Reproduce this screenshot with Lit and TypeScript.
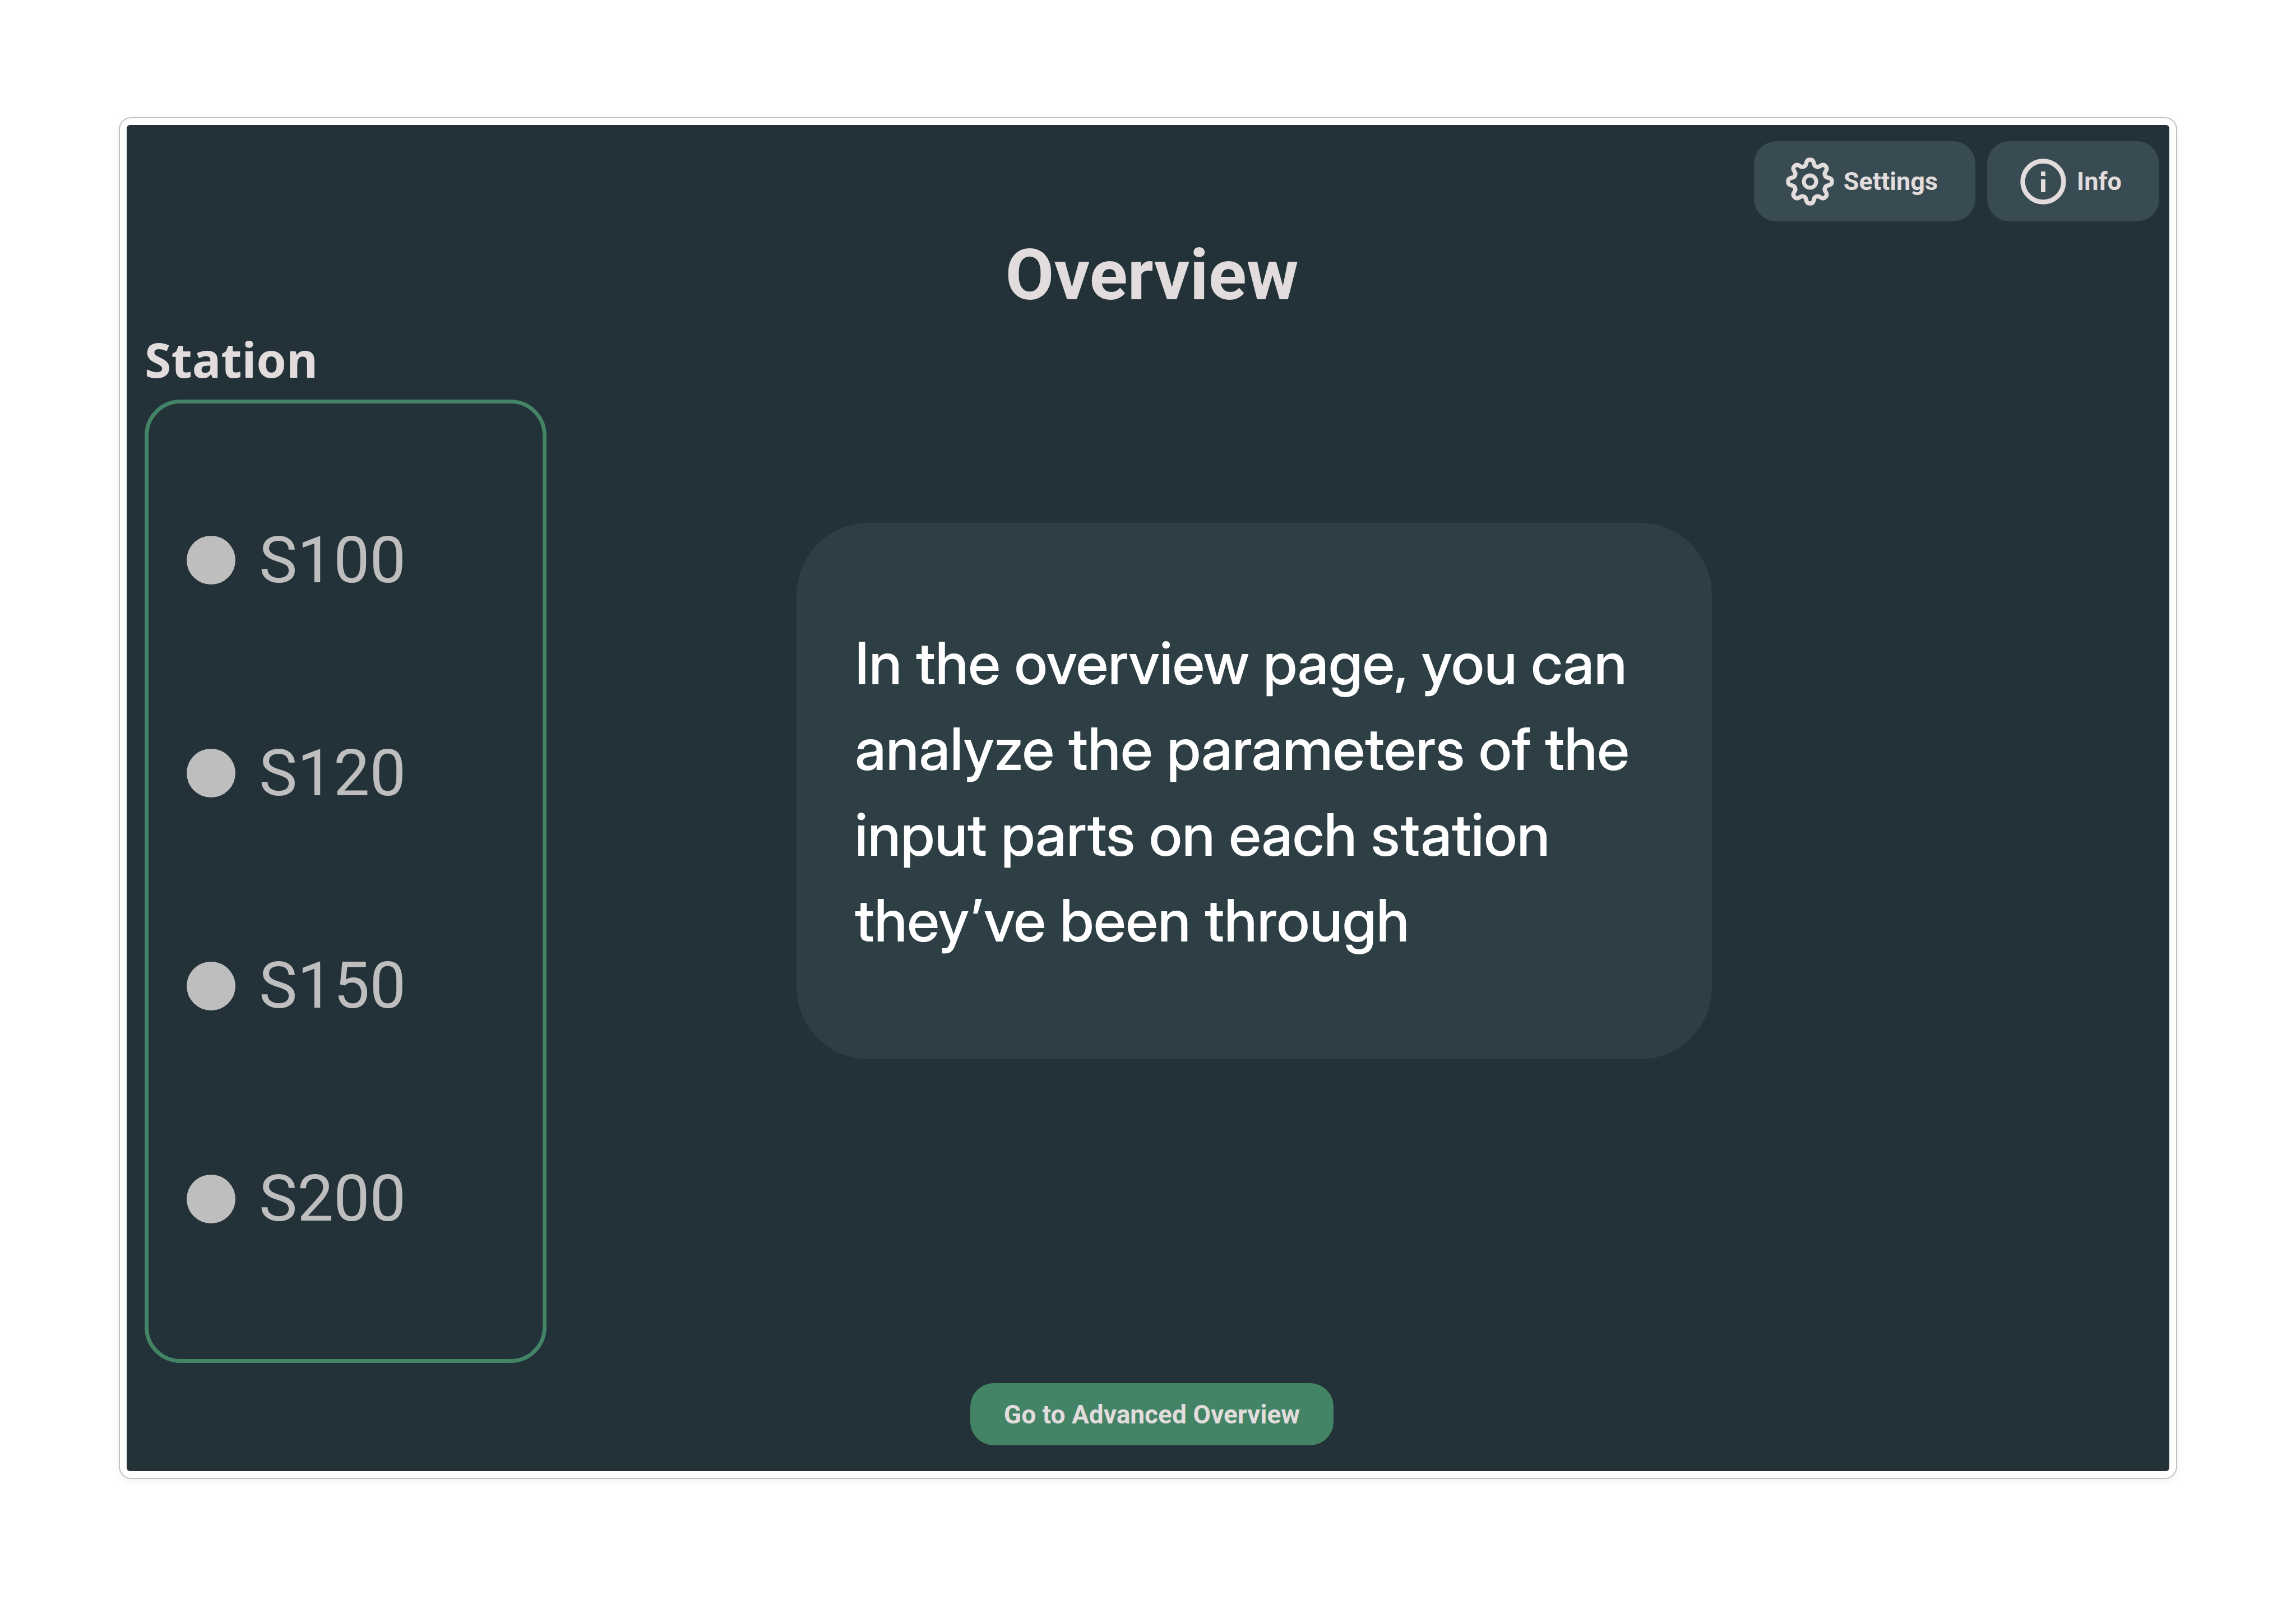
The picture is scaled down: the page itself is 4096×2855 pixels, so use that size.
import { LitElement, html, css, svg } from "lit";
import { customElement, property, state } from "lit/decorators.js";

const gearPath = (() => {
  const points: string[] = [];
  const steps = 240;
  for (let i = 0; i < steps; i++) {
    const a = (i / steps) * Math.PI * 2;
    const wave = Math.cos(a * 8);
    const shaped = Math.tanh(wave * 1.6) / Math.tanh(1.6);
    const r = 34 + shaped * 5;
    points.push(`${(45 + r * Math.sin(a)).toFixed(2)} ${(45 - r * Math.cos(a)).toFixed(2)}`);
  }
  return `M${points.join("L")}Z`;
})();

@customElement("app-icon")
export class AppIcon extends LitElement {
  @property() name = "info";

  static styles = css`
    :host { display: block; width: 90px; height: 90px; }
    .icon { display: block; width: 100%; height: 100%; fill: none; stroke: currentColor; }
  `;

  render() {
    const gear = svg`
      <path d=${gearPath} stroke-width="7.5" stroke-linejoin="round"></path>
      <circle cx="45" cy="45" r="11" stroke-width="7"></circle>`;
    const info = svg`
      <circle cx="45" cy="45" r="36.5" stroke-width="8.5"></circle>
      <path d="M45 41V64" stroke-width="8"></path>
      <path d="M45 27V35" stroke-width="8"></path>`;
    return html`<svg class="icon" viewBox="0 0 90 90" aria-hidden="true">
      ${this.name === "gear" ? gear : info}
    </svg>`;
  }
}

@customElement("app-root")
export class AppRoot extends LitElement {
  @state() private station = "";

  private readonly stations = ["S100", "S120", "S150", "S200"];

  static styles = css`
    :host { display: block; background: #ffffff; font-family: Roboto, sans-serif; color: #e2dcdc; }
    * { box-sizing: border-box; }
    .page { min-height: 100vh; padding: 209px 212px 216px; display: flex; }
    .frame {
      flex: 1; display: flex; padding: 12px; background: #ffffff;
      border: 2px solid #c0c0c0; border-radius: 22px;
      box-shadow: 0 4px 14px rgba(0, 0, 0, 0.06);
    }
    .screen {
      flex: 1; display: flex; flex-direction: column;
      padding: 29px 18px 46px 32px; background: #233138; border-radius: 6px;
    }
    .toolbar { display: flex; justify-content: flex-end; gap: 21px; }
    button { border: 0; margin: 0; color: inherit; font: 700 46px/54px Roboto, sans-serif; cursor: pointer; }
    .tool {
      display: flex; align-items: center; gap: 15px; height: 143px; font-size: 45px;
      padding: 0 67px 0 55px; border-radius: 40px; background: #394b52;
    }
    .title { margin: 32px 0 0; text-align: center; font-size: 126px; line-height: 128px; font-weight: 700; }
    .label {
      margin: 38px 0 24px; font-family: "Noto Sans", sans-serif;
      font-size: 86px; line-height: 96px; font-weight: 700;
    }
    .main { flex: 1; display: grid; grid-template-columns: 717px 446fr 1633px 798fr; }
    .stations {
      margin: 0; padding: 90px 68px 96px; display: grid; grid-auto-rows: 1fr;
      border: 7px solid #428465; border-radius: 64px;
    }
    .station {
      display: flex; align-items: center; gap: 42px;
      font-size: 115px; line-height: 136px; color: #bebebe; cursor: pointer;
    }
    .radio {
      appearance: none; width: 87px; height: 87px; margin: 0;
      border-radius: 50%; background: #bebebe; cursor: pointer;
    }
    .radio:checked { background: #428465; }
    .note {
      grid-column: 3; align-self: start; margin: 220px 0 0; padding: 173px 104px 172px;
      border-radius: 128px; background: #2e3e45; color: #ffffff;
      font-family: "Inter Display", Inter, sans-serif;
      font-size: 105px; line-height: 153px; font-weight: 500;
    }
    .line { display: block; white-space: nowrap; }
    .footer { display: flex; justify-content: center; margin-top: 36px; }
    .advanced { height: 111px; padding: 0 60px; border-radius: 42px; background: #428465; }
  `;

  render() {
    return html`
      <div class="page">
        <div class="frame">
          <main class="screen">
            <nav class="toolbar">
              <button class="tool" type="button"><app-icon name="gear"></app-icon><span>Settings</span></button>
              <button class="tool" type="button"><app-icon name="info"></app-icon><span>Info</span></button>
            </nav>
            <h1 class="title">Overview</h1>
            <h2 class="label" id="station-label">Station</h2>
            <div class="main">
              <div class="stations" role="radiogroup" aria-labelledby="station-label">
                ${this.stations.map(
                  (name) => html`<label class="station">
                    <input
                      class="radio" type="radio" name="station" .value=${name}
                      .checked=${this.station === name}
                      @change=${() => (this.station = name)}
                    />
                    <span>${name}</span>
                  </label>`
                )}
              </div>
              <p class="note">
                <span class="line">In the overview page, you can </span>
                <span class="line">analyze the parameters of the </span>
                <span class="line">input parts on each station </span>
                <span class="line">they’ve been through</span>
              </p>
            </div>
            <div class="footer">
              <button class="advanced" type="button">Go to Advanced Overview</button>
            </div>
          </main>
        </div>
      </div>
    `;
  }
}
